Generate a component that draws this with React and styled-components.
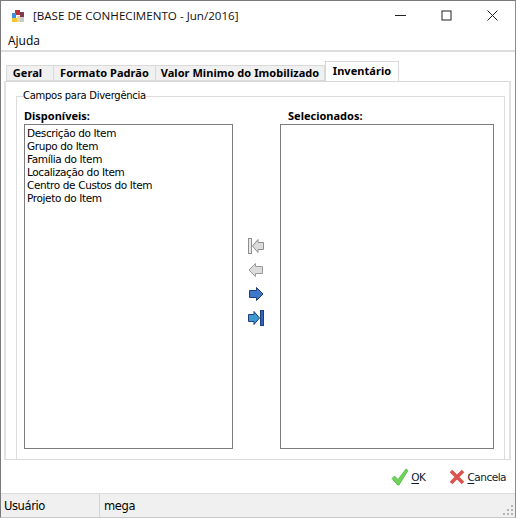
import React from 'react';
import styled, { createGlobalStyle } from 'styled-components';

const Global = createGlobalStyle`
  html, body { margin: 0; padding: 0; background: #fff; }
  body { font-family: "DejaVu Sans", Tahoma, sans-serif; }
`;

const Win = styled.div`
  width: 516px; height: 518px; box-sizing: border-box;
  border: 1px solid #7a7a7a; border-right-color: #8c8c8c; border-bottom-color: #c8c8c8;
  display: flex; flex-direction: column; background: #fff; color: #000;
`;
const TitleBar = styled.div`
  height: 29px; display: flex; align-items: center; padding: 0 0 0 10px; flex: none;
`;
const AppIcon = styled.svg`width: 14px; height: 14px; flex: none;`;
const Title = styled.div`
  font: 11.6px "Open Sans", sans-serif; margin-left: 8px; flex: 1; color: #111; white-space: nowrap;
`;
const WinBtn = styled.div`
  width: 46px; height: 29px; display: flex; align-items: center; justify-content: center; flex: none;
`;
const Menu = styled.div`
  height: 20px; flex: none; display: flex; align-items: center; padding-left: 7px;
  font: 12px "Open Sans", sans-serif; border-bottom: 2px solid #dcdcdc;
`;
const Body = styled.div`
  flex: 1; padding: 9px 4px 0 3px; display: flex; flex-direction: column; min-height: 0;
`;
const Tabs = styled.div`display: flex; height: 20px; padding-left: 2px; flex: none; align-items: flex-end;`;
const Tab = styled.div`
  height: ${p => (p.$active ? 20 : 16)}px; box-sizing: border-box; display: flex; align-items: center; justify-content: center;
  width: ${p => p.$w}px; flex: none;
  font: bold 11px/1 "Noto Sans", sans-serif; letter-spacing: 0.05px; white-space: nowrap;
  background: ${p => (p.$active ? '#fff' : '#f0f0f0')};
  border: 1px solid #d9d9d9; border-left-width: ${p => (p.$first || p.$active ? 1 : 0)}px;
  border-bottom: ${p => (p.$active ? 'none' : '1px solid #d9d9d9')};
  padding-bottom: ${p => (p.$active ? 3 : 2)}px;
  padding-right: ${p => (p.$first ? 5 : 0)}px;
`;
const Panel = styled.div`
  width: 507px; height: 379px; flex: none; box-sizing: border-box;
  border: 2px solid #e2e2e2; border-top: 1px solid #d9d9d9; border-bottom: 1px solid #d9d9d9;
  padding: 8px 4px 0 10px;
`;
const Group = styled.fieldset`
  margin: 0; padding: 0 10px 0 7px; height: 369px; box-sizing: border-box; min-width: 0;
  border: 1px solid #dcdcdc; border-bottom: none;
  display: block;
`;
const Legend = styled.legend`
  font: 10px "DejaVu Sans", sans-serif; letter-spacing: -0.28px; padding: 0; margin-left: -1px; line-height: 12px;
`;
const Cols = styled.div`display: flex; margin-top: 7px;`;
const Col = styled.div`display: flex; flex-direction: column; width: ${p => p.$w}px; flex: none;`;
const Label = styled.div`
  font: bold 11px/14px "Noto Sans", sans-serif; height: 14px; margin-bottom: 1px;
  padding-left: ${p => p.$pad || 0}px;
`;
const List = styled.div`
  height: 325px; box-sizing: border-box; border: 1px solid #7c7c7c; padding: 2px 0 0 2px;
  font: 10.5px/13px "DejaVu Sans", sans-serif; letter-spacing: -0.37px; background: #fff;
`;
const Item = styled.div`height: 13px; white-space: nowrap;`;
const Arrows = styled.div`
  width: 47px; flex: none; display: flex; flex-direction: column; align-items: center;
  padding-top: 129px; gap: 8px;
`;
const ArrowSvg = styled.svg`width: 18px; height: 16px; display: block; position: relative; left: -1px;`;
const Footer = styled.div`
  height: 33px; flex: none; display: flex; justify-content: flex-end; align-items: center; padding-right: 5px; gap: 24px;
`;
const Action = styled.div`
  display: flex; align-items: center; gap: 2px; font: 10.5px "DejaVu Sans", sans-serif; letter-spacing: -0.5px; color: #0b1a33;
  u { text-underline-offset: 2px; }
`;
const Status = styled.div`
  height: 23px; flex: none; background: #f0f0f0; border-top: 1px solid #dcdcdc; display: flex; position: relative; align-items: center;
  font: 11.5px "DejaVu Sans", sans-serif; letter-spacing: -0.4px; margin: 0;
`;
const Cell = styled.div`
  width: ${p => p.$w}px; height: 100%; display: flex; align-items: center; box-sizing: border-box; padding-left: ${p => p.$pad}px;
  border-right: ${p => (p.$line ? '1px solid #d4d4d4' : 'none')}; flex: none;
`;
const Grip = styled.svg`position: absolute; right: 1px; bottom: 1px; width: 12px; height: 12px;`;

const Arrow = ({ kind }) => (
  <ArrowSvg viewBox="0 0 18 16">
    {kind === 'lbar' && <>
      <rect x="1.5" y="0.5" width="3" height="15" fill="#e8e8e8" stroke="#8e8e8e" />
      <path d="M5.5 8 L11 1.5 V4.5 H16.5 V11.5 H11 V14.5 Z" fill="#dcdcdc" stroke="#8e8e8e" />
    </>}
    {kind === 'l' && <path d="M2 8 L8.5 1.5 V4.5 H15.5 V11.5 H8.5 V14.5 Z" fill="#dcdcdc" stroke="#9a9a9a" />}
    {kind === 'r' && <path d="M16 8 L9.5 1.5 V4.5 H2.5 V11.5 H9.5 V14.5 Z" fill="#3f78c8" stroke="#1d3f7c" />}
    {kind === 'rbar' && <>
      <path d="M12.5 8 L7 1.5 V4.5 H1.5 V11.5 H7 V14.5 Z" fill="#3f9ad0" stroke="#1d3f7c" />
      <rect x="13.5" y="0.5" width="3" height="15" fill="#2f66b8" stroke="#1d3f7c" />
    </>}
  </ArrowSvg>
);

const items = ['Descrição do Item', 'Grupo do Item', 'Família do Item', 'Localização do Item', 'Centro de Custos do Item', 'Projeto do Item'];

export default function App() {
  return (
    <Win>
      <Global />
      <TitleBar>
        <AppIcon viewBox="0 0 14 14">
          <rect x="4" y="1" width="5" height="5" fill="#b8323c" />
          <rect x="9" y="3" width="4" height="5" fill="#7a3a50" />
          <rect x="1" y="4" width="4" height="5" fill="#3f8fe0" />
          <rect x="1" y="9" width="5" height="4" fill="#f4c430" />
          <rect x="6" y="7" width="3" height="6" fill="#e9d9a0" />
          <rect x="9" y="8" width="4" height="5" fill="#c9c9c9" />
        </AppIcon>
        <Title>[BASE DE CONHECIMENTO - Jun/2016]</Title>
        <WinBtn><svg width="11" height="11" viewBox="0 0 11 11"><path d="M0 5.5H11" stroke="#222" /></svg></WinBtn>
        <WinBtn><svg width="11" height="11" viewBox="0 0 11 11"><rect x="1" y="1" width="9" height="9" fill="none" stroke="#222" /></svg></WinBtn>
        <WinBtn><svg width="11" height="11" viewBox="0 0 11 11"><path d="M0.5 0.5L10.5 10.5M10.5 0.5L0.5 10.5" stroke="#222" /></svg></WinBtn>
      </TitleBar>
      <Menu>Ajuda</Menu>
      <Body>
        <Tabs>
          <Tab $first $w={48}>Geral</Tab>
          <Tab $w={102}>Formato Padrão</Tab>
          <Tab $w={169}>Valor Minimo do Imobilizado</Tab>
          <Tab $active $w={74}>Inventário</Tab>
        </Tabs>
        <Panel>
          <Group>
            <Legend>Campos para Divergência</Legend>
            <Cols>
              <Col $w={209}>
                <Label>Disponíveis:</Label>
                <List>{items.map(t => <Item key={t}>{t}</Item>)}</List>
              </Col>
              <Arrows>
                <Arrow kind="lbar" />
                <Arrow kind="l" />
                <Arrow kind="r" />
                <Arrow kind="rbar" />
              </Arrows>
              <Col $w={214}>
                <Label $pad={8}>Selecionados:</Label>
                <List />
              </Col>
            </Cols>
          </Group>
        </Panel>
        <Footer>
          <Action>
            <svg width="18" height="18" viewBox="0 0 18 18"><path d="M1 10.5 L3.5 8 L7 11.5 L15 1 L17 2.5 L8 17 H6.5 Z" fill="#6fd35a" stroke="#56b845" strokeWidth="0.8" /></svg>
            <span><u>O</u>K</span>
          </Action>
          <Action>
            <svg width="16" height="16" viewBox="0 0 16 16"><path d="M2 2 L14 14 M14 2 L2 14" stroke="#d9534f" strokeWidth="3.6" /></svg>
            <span><u>C</u>ancela</span>
          </Action>
        </Footer>
      </Body>
      <Status>
        <Cell $w={99} $pad={3} $line>Usuário</Cell>
        <Cell $w={120} $pad={4}>mega</Cell>
        <Grip viewBox="0 0 12 12" fill="#b4b4b4">
          <rect x="9" y="1" width="2" height="2" /><rect x="5" y="5" width="2" height="2" /><rect x="9" y="5" width="2" height="2" />
          <rect x="1" y="9" width="2" height="2" /><rect x="5" y="9" width="2" height="2" /><rect x="9" y="9" width="2" height="2" />
        </Grip>
      </Status>
    </Win>
  );
}
